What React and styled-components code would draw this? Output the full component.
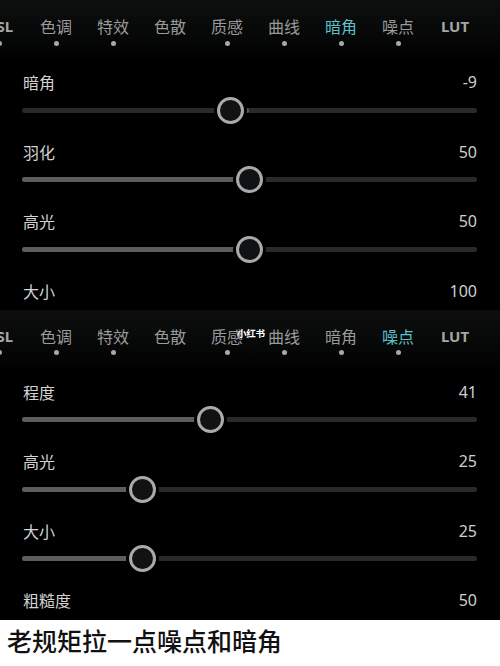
import React from "react";
import styled, { createGlobalStyle } from "styled-components";

const Global = createGlobalStyle`
  html, body { margin: 0; padding: 0; background: #000; }
  body { width: 500px; overflow: hidden; }
`;

const CJK = `"Noto Sans CJK SC", "Noto Sans", sans-serif`;

const Page = styled.div`
  position: relative;
  width: 500px;
  height: 666px;
  overflow: hidden;
  background: #000;
  font-family: ${CJK};
`;

const Panel = styled.section`
  height: ${(p) => p.$h}px;
  overflow: hidden;
  background: #000;
`;

const TabBar = styled.div`
  display: flex;
  height: 58px;
  margin-left: -29.5px;
  background: linear-gradient(180deg, #0d0f0f 0%, #070808 55%, #020202 100%);
`;

const Tab = styled.div`
  flex: 0 0 57px;
  display: flex;
  flex-direction: column;
  align-items: center;
  padding-top: 15px;
`;

const TabText = styled.span`
  height: 22px;
  line-height: 22px;
  font-size: ${(p) => (p.$latin ? "15px" : "16px")};
  font-family: ${(p) => (p.$latin ? `"Noto Sans", sans-serif` : CJK)};
  font-weight: ${(p) => (p.$latin ? 700 : 400)};
  color: ${(p) => (p.$active ? "#5cc1cb" : p.$latin ? "#a6a6a6" : "#9a9a9a")};
  white-space: nowrap;
`;

const Dot = styled.span`
  width: 5px;
  height: 5px;
  margin-top: 3.5px;
  border-radius: 50%;
  background: ${(p) => (p.$show ? "#a8a8a8" : "transparent")};
`;

const Rows = styled.div`
  padding: 14px 23px 0 22px;
`;

const Row = styled.div`
  height: 69.5px;
  display: flex;
  flex-direction: column;
`;

const Header = styled.div`
  height: 20px;
  display: flex;
  justify-content: space-between;
  align-items: center;
  line-height: 20px;
`;

const Label = styled.span`
  font-size: 16px;
  color: #d2d2d2;
  padding-left: 1px;
`;

const Value = styled.span`
  font-family: "Noto Sans", sans-serif;
  font-size: 16px;
  color: #cfcfcf;
`;

const TrackArea = styled.div`
  position: relative;
  height: 28px;
  margin-top: 4px;
`;

const Rail = styled.div`
  height: 5px;
  margin-top: 11.5px;
  border-radius: 3px;
  background: #2a2a2a;
`;

const Fill = styled.div`
  position: absolute;
  top: 11.5px;
  height: 5px;
  border-radius: 3px;
  background: #5d5d5d;
`;

const Thumb = styled.div`
  position: absolute;
  top: 0.5px;
  width: 27px;
  height: 27px;
  box-sizing: border-box;
  margin-left: -13.5px;
  border-radius: 50%;
  border: 3px solid #aaaaaa;
  background: #111213;
  box-shadow: 0 0 0 3px #000;
`;

const Watermark = styled.span`
  position: absolute;
  left: 237px;
  top: 326px;
  font-size: 9.5px;
  font-weight: 700;
  color: #ffffff;
  letter-spacing: -0.3px;
`;

const Caption = styled.div`
  height: 46px;
  background: #fff;
  padding: 5px 0 0 7px;
  box-sizing: border-box;
  font-size: 25px;
  line-height: 30px;
  font-weight: 500;
  color: #111;
`;

const TABS = [
  { t: "HSL", latin: true, dot: true },
  { t: "色调", dot: true },
  { t: "特效", dot: true },
  { t: "色散", dot: false },
  { t: "质感", dot: true },
  { t: "曲线", dot: true },
  { t: "暗角", dot: true },
  { t: "噪点", dot: true },
  { t: "LUT", latin: true, dot: false },
];

function Slider({ value, bipolar }) {
  const frac = bipolar ? (value + 100) / 200 : value / 100;
  const x = 13 + frac * 429;
  const origin = bipolar ? 13 + 0.5 * 429 : 0;
  const left = Math.min(origin, x);
  const width = Math.abs(x - origin);
  return (
    <TrackArea>
      <Rail />
      <Fill style={{ left, width }} />
      <Thumb style={{ left: x }} />
    </TrackArea>
  );
}

function SettingsPanel({ active, rows, h }) {
  return (
    <Panel $h={h}>
      <TabBar>
        {TABS.map((tab) => (
          <Tab key={tab.t}>
            <TabText $latin={tab.latin} $active={tab.t === active}>
              {tab.t}
            </TabText>
            <Dot $show={tab.dot} />
          </Tab>
        ))}
      </TabBar>
      <Rows>
        {rows.map((r) => (
          <Row key={r.label}>
            <Header>
              <Label>{r.label}</Label>
              <Value>{r.value}</Value>
            </Header>
            {!r.cut && <Slider value={r.value} bipolar={r.bipolar} />}
          </Row>
        ))}
      </Rows>
    </Panel>
  );
}

export default function App() {
  return (
    <Page>
      <Global />
      <SettingsPanel
        h={309.5}
        active="暗角"
        rows={[
          { label: "暗角", value: -9, bipolar: true },
          { label: "羽化", value: 50 },
          { label: "高光", value: 50 },
          { label: "大小", value: 100, cut: true },
        ]}
      />
      <SettingsPanel
        h={310.5}
        active="噪点"
        rows={[
          { label: "程度", value: 41 },
          { label: "高光", value: 25 },
          { label: "大小", value: 25 },
          { label: "粗糙度", value: 50, cut: true },
        ]}
      />
      <Watermark>小红书</Watermark>
      <Caption>老规矩拉一点噪点和暗角</Caption>
    </Page>
  );
}
